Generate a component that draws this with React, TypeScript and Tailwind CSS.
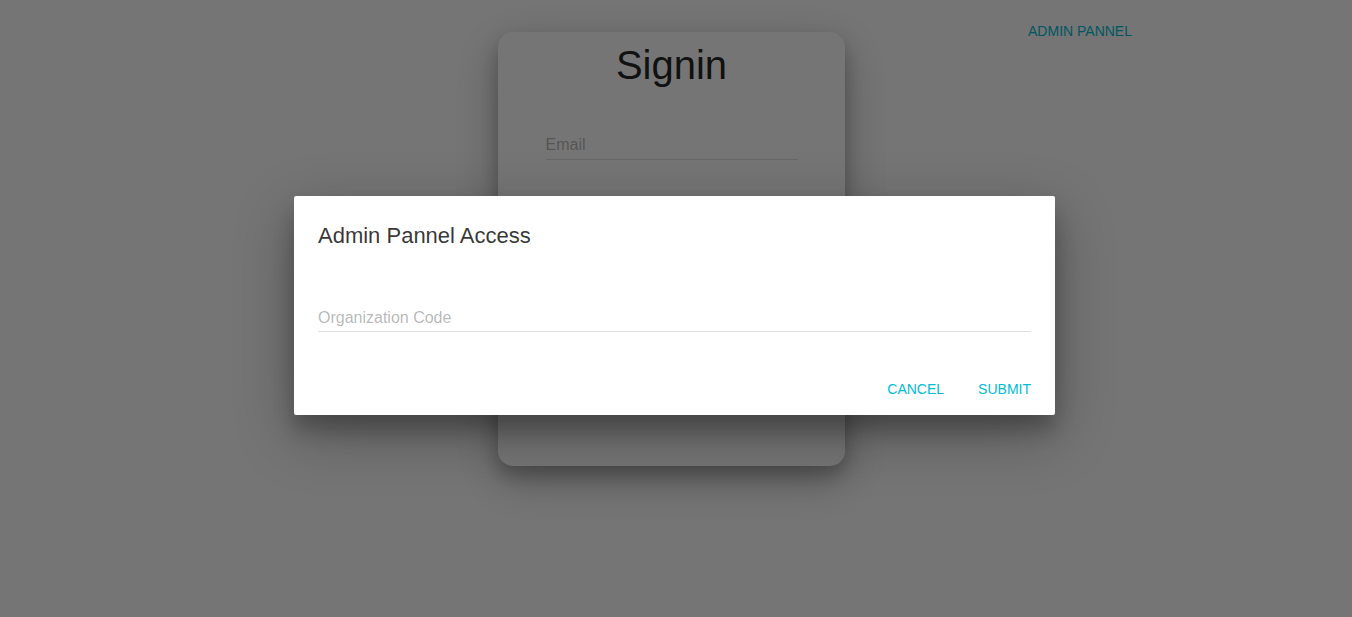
import React from "react";

function FlatButton({ label }: { label: string }) {
  return (
    <button className="h-9 px-4 text-[14px] uppercase text-[#00bcd4] tracking-normal">
      {label}
    </button>
  );
}

function SigninCard() {
  return (
    <div className="w-[347px] h-[434px] mt-8 ml-[498px] bg-white rounded-[15px] shadow-[0_14px_45px_rgba(0,0,0,0.25),0_10px_18px_rgba(0,0,0,0.22)] flex flex-col items-center">
      <h1 className="text-[40px] leading-[48px] mt-[9px] text-[rgba(0,0,0,0.87)]">Signin</h1>
      <div className="w-[252px] mt-[44px]">
        <div className="text-[16px] leading-6 text-[rgba(0,0,0,0.3)]">Email</div>
        <div className="mt-[2px] border-b border-[#e0e0e0]" />
      </div>
      <div className="w-[252px] mt-[48px]">
        <div className="text-[16px] leading-6 text-[rgba(0,0,0,0.3)]">Password</div>
        <div className="mt-[2px] border-b border-[#e0e0e0]" />
      </div>
    </div>
  );
}

function AdminDialog() {
  return (
    <div className="absolute left-[294px] top-[196px] w-[761px] bg-white rounded-[2px] shadow-[0_19px_60px_rgba(0,0,0,0.3),0_15px_20px_rgba(0,0,0,0.22)]">
      <h3 className="px-6 pt-6 text-[22px] leading-8 text-[rgba(0,0,0,0.8)]">Admin Pannel Access</h3>
      <div className="px-6 pt-[54px]">
        <div className="text-[16px] leading-6 text-[rgba(0,0,0,0.3)]">Organization Code</div>
        <div className="mt-[1px] border-b border-[#e0e0e0]" />
      </div>
      <div className="flex justify-end gap-[2px] p-2 mt-[31px]">
        <FlatButton label="Cancel" />
        <FlatButton label="Submit" />
      </div>
    </div>
  );
}

export default function App() {
  return (
    <div className="relative w-full h-[617px] overflow-hidden bg-white font-['Liberation_Sans',Arial,sans-serif]">
      <div className="absolute right-[204px] top-[13px]">
        <FlatButton label="Admin Pannel" />
      </div>
      <div className="flex">
        <SigninCard />
      </div>
      <div className="absolute inset-0 bg-[rgba(0,0,0,0.54)]" />
      <AdminDialog />
    </div>
  );
}
